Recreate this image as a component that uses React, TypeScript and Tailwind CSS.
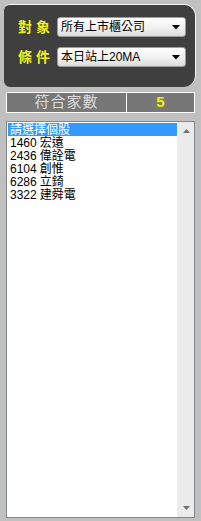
const items = [
  { code: "", name: "請選擇個股" },
  { code: "1460", name: "宏遠" },
  { code: "2436", name: "偉詮電" },
  { code: "6104", name: "創惟" },
  { code: "6286", name: "立錡" },
  { code: "3322", name: "建舜電" },
];

const font = "font-['Liberation_Sans','Noto_Sans_CJK_TC',sans-serif]";

function Select({ value }: { value: string }) {
  return (
    <div className="flex h-[20px] w-[129px] shrink-0 items-center justify-between rounded-[3px] border border-[#9c9c9c] bg-gradient-to-b from-[#fefefe] via-[#f2f2f2] to-[#dcdcdc] pl-[3px] pr-[5px]">
      <span className="whitespace-nowrap text-[12px] leading-none text-black">{value}</span>
      <svg width="8" height="5" viewBox="0 0 8 5">
        <path d="M0 0 H8 L4 4.5 Z" fill="#000" />
      </svg>
    </div>
  );
}

export default function App() {
  return (
    <div className={`flex h-[521px] w-[201px] flex-col bg-[#c0c0c0] ${font}`}>
      <div className="ml-[4px] mt-[4px] flex h-[83px] w-[192px] flex-col gap-[10px] rounded-tl-[6px] rounded-tr-[12px] rounded-br-[12px] rounded-bl-[6px] border-t border-r border-[#f4f4f4] bg-[#3f3f3f] pl-[14px] pt-[12px]">
        <div className="flex items-center gap-[2px]">
          <span className="w-[37px] shrink-0 whitespace-nowrap text-[14px] font-bold leading-none tracking-[4px] text-[#f0f020]">對象</span>
          <Select value="所有上市櫃公司" />
        </div>
        <div className="flex items-center gap-[2px]">
          <span className="w-[37px] shrink-0 whitespace-nowrap text-[14px] font-bold leading-none tracking-[4px] text-[#f0f020]">條件</span>
          <Select value="本日站上20MA" />
        </div>
      </div>

      <div className="ml-[6px] mt-[5px] flex h-[21px] w-[189px] border border-white bg-[#777777]">
        <div className="flex w-[120px] items-center justify-center border-r border-white text-[15px] tracking-[1px] text-[#dcdcdc]">
          符合家數
        </div>
        <div className="flex flex-1 items-center justify-center text-[15px] font-bold text-[#f0f000]">5</div>
      </div>

      <div className="mb-[3px] ml-[6px] mt-[8px] flex w-[189px] flex-1 border border-[#828790] bg-white">
        <div className="flex flex-1 flex-col pl-[1px] pt-[1px]">
          {items.map((it, i) => (
            <div
              key={i}
              className={`flex h-[13px] items-center gap-[3px] pl-[2px] text-[12px] leading-none ${
                i === 0 ? "bg-[#3399ff] text-white" : "text-black"
              }`}
            >
              {it.code && <span>{it.code}</span>}
              <span>{it.name}</span>
            </div>
          ))}
        </div>
        <div className="flex w-[17px] flex-col items-center justify-between border-l border-[#f0f0f0] bg-[#ebebeb] py-[7px]">
          <svg width="7" height="4" viewBox="0 0 7 4">
            <path d="M0 4 H7 L3.5 0 Z" fill="#707070" />
          </svg>
          <svg width="7" height="4" viewBox="0 0 7 4">
            <path d="M0 0 H7 L3.5 4 Z" fill="#707070" />
          </svg>
        </div>
      </div>
    </div>
  );
}
